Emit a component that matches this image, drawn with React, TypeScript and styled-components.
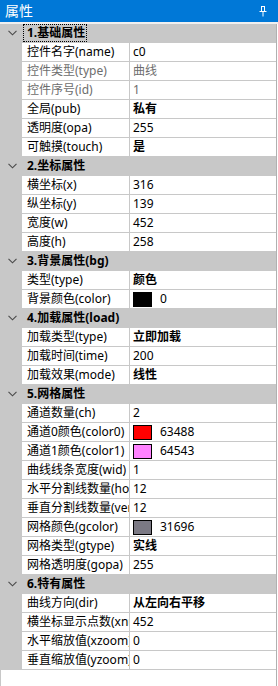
import React from 'react'
import styled, { createGlobalStyle } from 'styled-components'

const GlobalStyle = createGlobalStyle`
	html, body {
		margin: 0;
		padding: 0;
		background: #fff;
	}
	body {
		font-family: "Noto Sans", "Noto Sans CJK SC", sans-serif;
	}
`

type Item = {
	name: string
	value: string
	bold?: boolean
	disabled?: boolean
	color?: string
}

type Category = {
	title: string
	items: Item[]
}

const categories: Category[] = [
	{
		title: '1.基础属性',
		items: [
			{ name: '控件名字(name)', value: 'c0' },
			{ name: '控件类型(type)', value: '曲线', disabled: true },
			{ name: '控件序号(id)', value: '1', disabled: true },
			{ name: '全局(pub)', value: '私有', bold: true },
			{ name: '透明度(opa)', value: '255' },
			{ name: '可触摸(touch)', value: '是', bold: true },
		],
	},
	{
		title: '2.坐标属性',
		items: [
			{ name: '横坐标(x)', value: '316' },
			{ name: '纵坐标(y)', value: '139' },
			{ name: '宽度(w)', value: '452' },
			{ name: '高度(h)', value: '258' },
		],
	},
	{
		title: '3.背景属性(bg)',
		items: [
			{ name: '类型(type)', value: '颜色', bold: true },
			{ name: '背景颜色(color)', value: '0', color: '#000000' },
		],
	},
	{
		title: '4.加载属性(load)',
		items: [
			{ name: '加载类型(type)', value: '立即加载', bold: true },
			{ name: '加载时间(time)', value: '200' },
			{ name: '加载效果(mode)', value: '线性', bold: true },
		],
	},
	{
		title: '5.网格属性',
		items: [
			{ name: '通道数量(ch)', value: '2' },
			{ name: '通道0颜色(color0)', value: '63488', color: '#ff0000' },
			{ name: '通道1颜色(color1)', value: '64543', color: '#ff82ff' },
			{ name: '曲线线条宽度(wid)', value: '1' },
			{ name: '水平分割线数量(hor)', value: '12' },
			{ name: '垂直分割线数量(ver)', value: '12' },
			{ name: '网格颜色(gcolor)', value: '31696', color: '#7b7984' },
			{ name: '网格类型(gtype)', value: '实线', bold: true },
			{ name: '网格透明度(gopa)', value: '255' },
		],
	},
	{
		title: '6.特有属性',
		items: [
			{ name: '曲线方向(dir)', value: '从左向右平移', bold: true },
			{ name: '横坐标显示点数(xnum)', value: '452' },
			{ name: '水平缩放值(xzoom)', value: '0' },
			{ name: '垂直缩放值(yzoom)', value: '0' },
		],
	},
]

function PinIcon() {
	return (
		<svg width="8" height="11" viewBox="0 0 8 11" fill="none">
			<path d="M2 0.5 H6 M2.5 0.5 V5.5 M5.5 0.5 V5.5 M0.5 5.5 H7.5 M4 5.5 V10.5" stroke="#fff" strokeWidth="1" />
		</svg>
	)
}

function Chevron() {
	return (
		<svg width="9" height="6" viewBox="0 0 9 6" fill="none">
			<polyline points="0.5,0.8 4.5,4.8 8.5,0.8" stroke="#4a4a4a" strokeWidth="1.1" />
		</svg>
	)
}

export default function App() {
	return (
		<>
			<GlobalStyle />
			<Panel>
				<TitleBar>
					<TitleText>属性</TitleText>
					<PinIcon />
				</TitleBar>
				<Body>
					{categories.map((cat, ci) => (
						<section key={cat.title}>
							<CategoryRow>
								<Gutter>
									<Chevron />
								</Gutter>
								<CategoryTitle $focused={ci === 0}>{cat.title}</CategoryTitle>
							</CategoryRow>
							{cat.items.map((item) => (
								<PropRow key={item.name}>
									<Gutter />
									<NameCell $disabled={item.disabled}>{item.name}</NameCell>
									<ValueCell $bold={item.bold} $disabled={item.disabled}>
										{item.color && <Swatch $color={item.color} />}
										{item.value}
									</ValueCell>
								</PropRow>
							))}
						</section>
					))}
				</Body>
			</Panel>
		</>
	)
}

const Panel = styled.div`
	width: 278px;
	height: 686px;
	display: flex;
	flex-direction: column;
	background: #fff;
	overflow: hidden;
`

const TitleBar = styled.div`
	height: 22px;
	flex-shrink: 0;
	background: #0078d7;
	border-bottom: 2px solid #f0f0f0;
	display: flex;
	align-items: center;
	justify-content: space-between;
	padding: 0 11px 0 5px;
`

const TitleText = styled.span`
	color: #fff;
	font-size: 14px;
	line-height: 22px;
`

const Body = styled.div`
	flex: 1;
	width: 277px;
	box-sizing: border-box;
	border-left: 1px solid #c8c8c8;
	border-right: 1px solid #b0b0b0;
`

const RowBase = styled.div`
	height: 19px;
	box-sizing: border-box;
	display: flex;
	border-bottom: 1px solid #c8c8c8;
	font-size: 12px;
	line-height: 18px;
	color: #000;
`

const CategoryRow = styled(RowBase)`
	background: #c8c8c8;
`

const PropRow = styled(RowBase)`
	background: #fff;
`

const Gutter = styled.div`
	width: 21px;
	flex-shrink: 0;
	background: #c8c8c8;
	display: flex;
	align-items: center;
	justify-content: center;
	padding-left: 2px;
	box-sizing: border-box;
`

const CategoryTitle = styled.div<{ $focused?: boolean }>`
	font-weight: bold;
	padding: 0 2px 0 4px;
	margin: 0 0 0 1px;
	height: 18px;
	box-sizing: border-box;
	outline: ${(p) => (p.$focused ? '1px dotted #000' : 'none')};
	outline-offset: -1px;
	white-space: nowrap;
`

const NameCell = styled.div<{ $disabled?: boolean }>`
	width: 108px;
	flex-shrink: 0;
	box-sizing: border-box;
	padding-left: 5px;
	border-right: 1px solid #c8c8c8;
	white-space: nowrap;
	overflow: hidden;
	color: ${(p) => (p.$disabled ? '#6d6d6d' : '#000')};
`

const ValueCell = styled.div<{ $bold?: boolean; $disabled?: boolean }>`
	flex: 1;
	display: flex;
	align-items: center;
	padding-left: 3px;
	white-space: nowrap;
	overflow: hidden;
	font-weight: ${(p) => (p.$bold ? 'bold' : 'normal')};
	color: ${(p) => (p.$disabled ? '#6d6d6d' : '#000')};
`

const Swatch = styled.span<{ $color: string }>`
	width: 19px;
	height: 15px;
	box-sizing: border-box;
	border: 1px solid #000;
	background: ${(p) => p.$color};
	margin-right: 8px;
	flex-shrink: 0;
`
